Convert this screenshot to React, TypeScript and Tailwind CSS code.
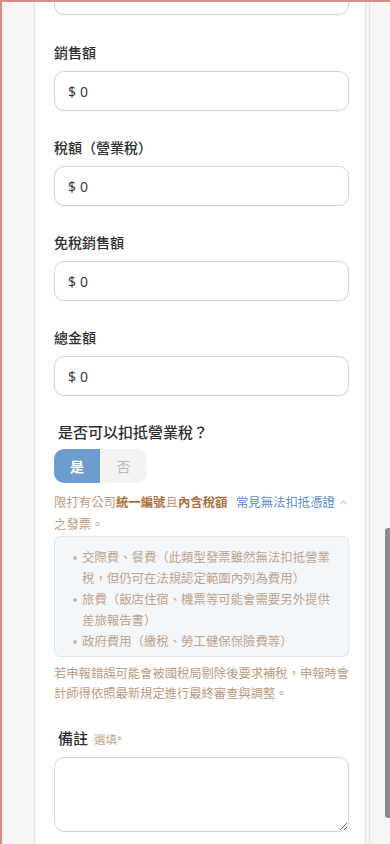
import React from "react";
import { ChevronUp } from "lucide-react";

const FONT = { fontFamily: '"Noto Sans", "Noto Sans CJK TC", sans-serif' };

function MoneyInput({ className = "", empty = false }: { className?: string; empty?: boolean }) {
  return (
    <div
      className={`h-[40px] rounded-[10px] border border-[#d3d3d3] bg-white flex items-center pl-[13px] text-[14px] text-[#3a3a3a] shadow-[0_1px_1px_rgba(0,0,0,0.04)] ${className}`}
    >
      {!empty && (
        <>
          <span>$</span>
          <span className="ml-[4px]">0</span>
        </>
      )}
    </div>
  );
}

function Field({ label, className = "" }: { label: string; className?: string }) {
  return (
    <div className={className}>
      <div className="h-[20px] leading-[20px] text-[14px] font-medium text-[#2e2e2e]">{label}</div>
      <MoneyInput className="mt-[8px]" />
    </div>
  );
}

export default function App() {
  return (
    <div
      style={FONT}
      className="relative h-[844px] w-[390px] overflow-hidden bg-[#f6f6f6] border-t-[2px] border-l-[2px] border-[#d98b87] flex"
    >
      <div className="w-[32px] shrink-0" />
      <div className="w-[332px] shrink-0 bg-white border-x border-[#e4e4e4] pl-[19px] pr-[16px]">
        <MoneyInput className="-mt-[27px]" empty />
        <Field label="銷售額" className="mt-[28px]" />
        <Field label="稅額（營業稅）" className="mt-[27px]" />
        <Field label="免稅銷售額" className="mt-[27px]" />
        <Field label="總金額" className="mt-[27px]" />

        <div className="mt-[25px] pl-[4px] h-[22px] leading-[22px] text-[15px] font-medium text-[#2e2e2e]">
          是否可以扣抵營業稅？
        </div>
        <div className="mt-[6px] flex w-[93px] h-[34px] rounded-[10px] overflow-hidden text-[14px]">
          <div className="w-[46px] bg-[#6d9ccf] text-white font-bold flex items-center justify-center">是</div>
          <div className="flex-1 bg-[#f3f3f3] text-[#b8b8b8] flex items-center justify-center">否</div>
        </div>

        <div className="mt-[9px] flex justify-between text-[12.4px] leading-[22px]">
          <div className="text-[#bd9a80] whitespace-nowrap">
            <div>
              限打有公司<span className="font-bold text-[#a8713f]">統一編號</span>且
              <span className="font-bold text-[#a8713f]">內含稅額</span>
            </div>
            <div>之發票。</div>
          </div>
          <div className="flex items-start text-[#5a8cc3] whitespace-nowrap">
            <span>常見無法扣抵憑證</span>
            <ChevronUp className="ml-[3px] mt-[5px] w-[11px] h-[11px] text-[#8aa8cc]" strokeWidth={2} />
          </div>
        </div>

        <div className="rounded-[6px] border border-[#dfe6ec] bg-[#f3f7fa] pt-[10px] pb-[4px] pl-[18px] pr-[12px] text-[12.4px] leading-[21px] text-[#bfa28b]">
          {[
            ["交際費、餐費（此類型發票雖然無法扣抵營業", "稅，但仍可在法規認定範圍內列為費用）"],
            ["旅費（飯店住宿、機票等可能會需要另外提供", "差旅報告書）"],
            ["政府費用（繳稅、勞工健保保險費等）"],
          ].map((lines, i) => (
            <div key={i} className="flex">
              <div className="w-[9px] shrink-0 pt-[9px]">
                <div className="w-[4px] h-[4px] rounded-full bg-[#c9b8aa]" />
              </div>
              <div className="whitespace-nowrap">
                {lines.map((l, j) => (
                  <div key={j}>{l}</div>
                ))}
              </div>
            </div>
          ))}
        </div>

        <div className="mt-[7px] text-[12.3px] leading-[20px] text-[#bb9a80] whitespace-nowrap">
          <div>若申報錯誤可能會被國稅局剔除後要求補稅，申報時會</div>
          <div>計師得依照最新規定進行最終審查與調整。</div>
        </div>

        <div className="mt-[24px] pl-[4px] h-[20px] leading-[20px] flex items-baseline">
          <span className="text-[15px] font-medium text-[#2e2e2e]">備註</span>
          <span className="ml-[6px] text-[11.5px] text-[#c5a488]">
            選填<span className="text-[9px] align-top">*</span>
          </span>
        </div>
        <textarea className="mt-[9px] block w-full h-[75px] rounded-[10px] border border-[#d3d3d3] bg-white resize-y outline-none" />
      </div>
      <div className="ml-[3px] flex-1 border-l border-[#e2e2e2]" />
      <div className="absolute right-0 top-[526px] w-[5px] h-[290px] rounded-l-[3px] bg-[#8c8c8c]" />
    </div>
  );
}
